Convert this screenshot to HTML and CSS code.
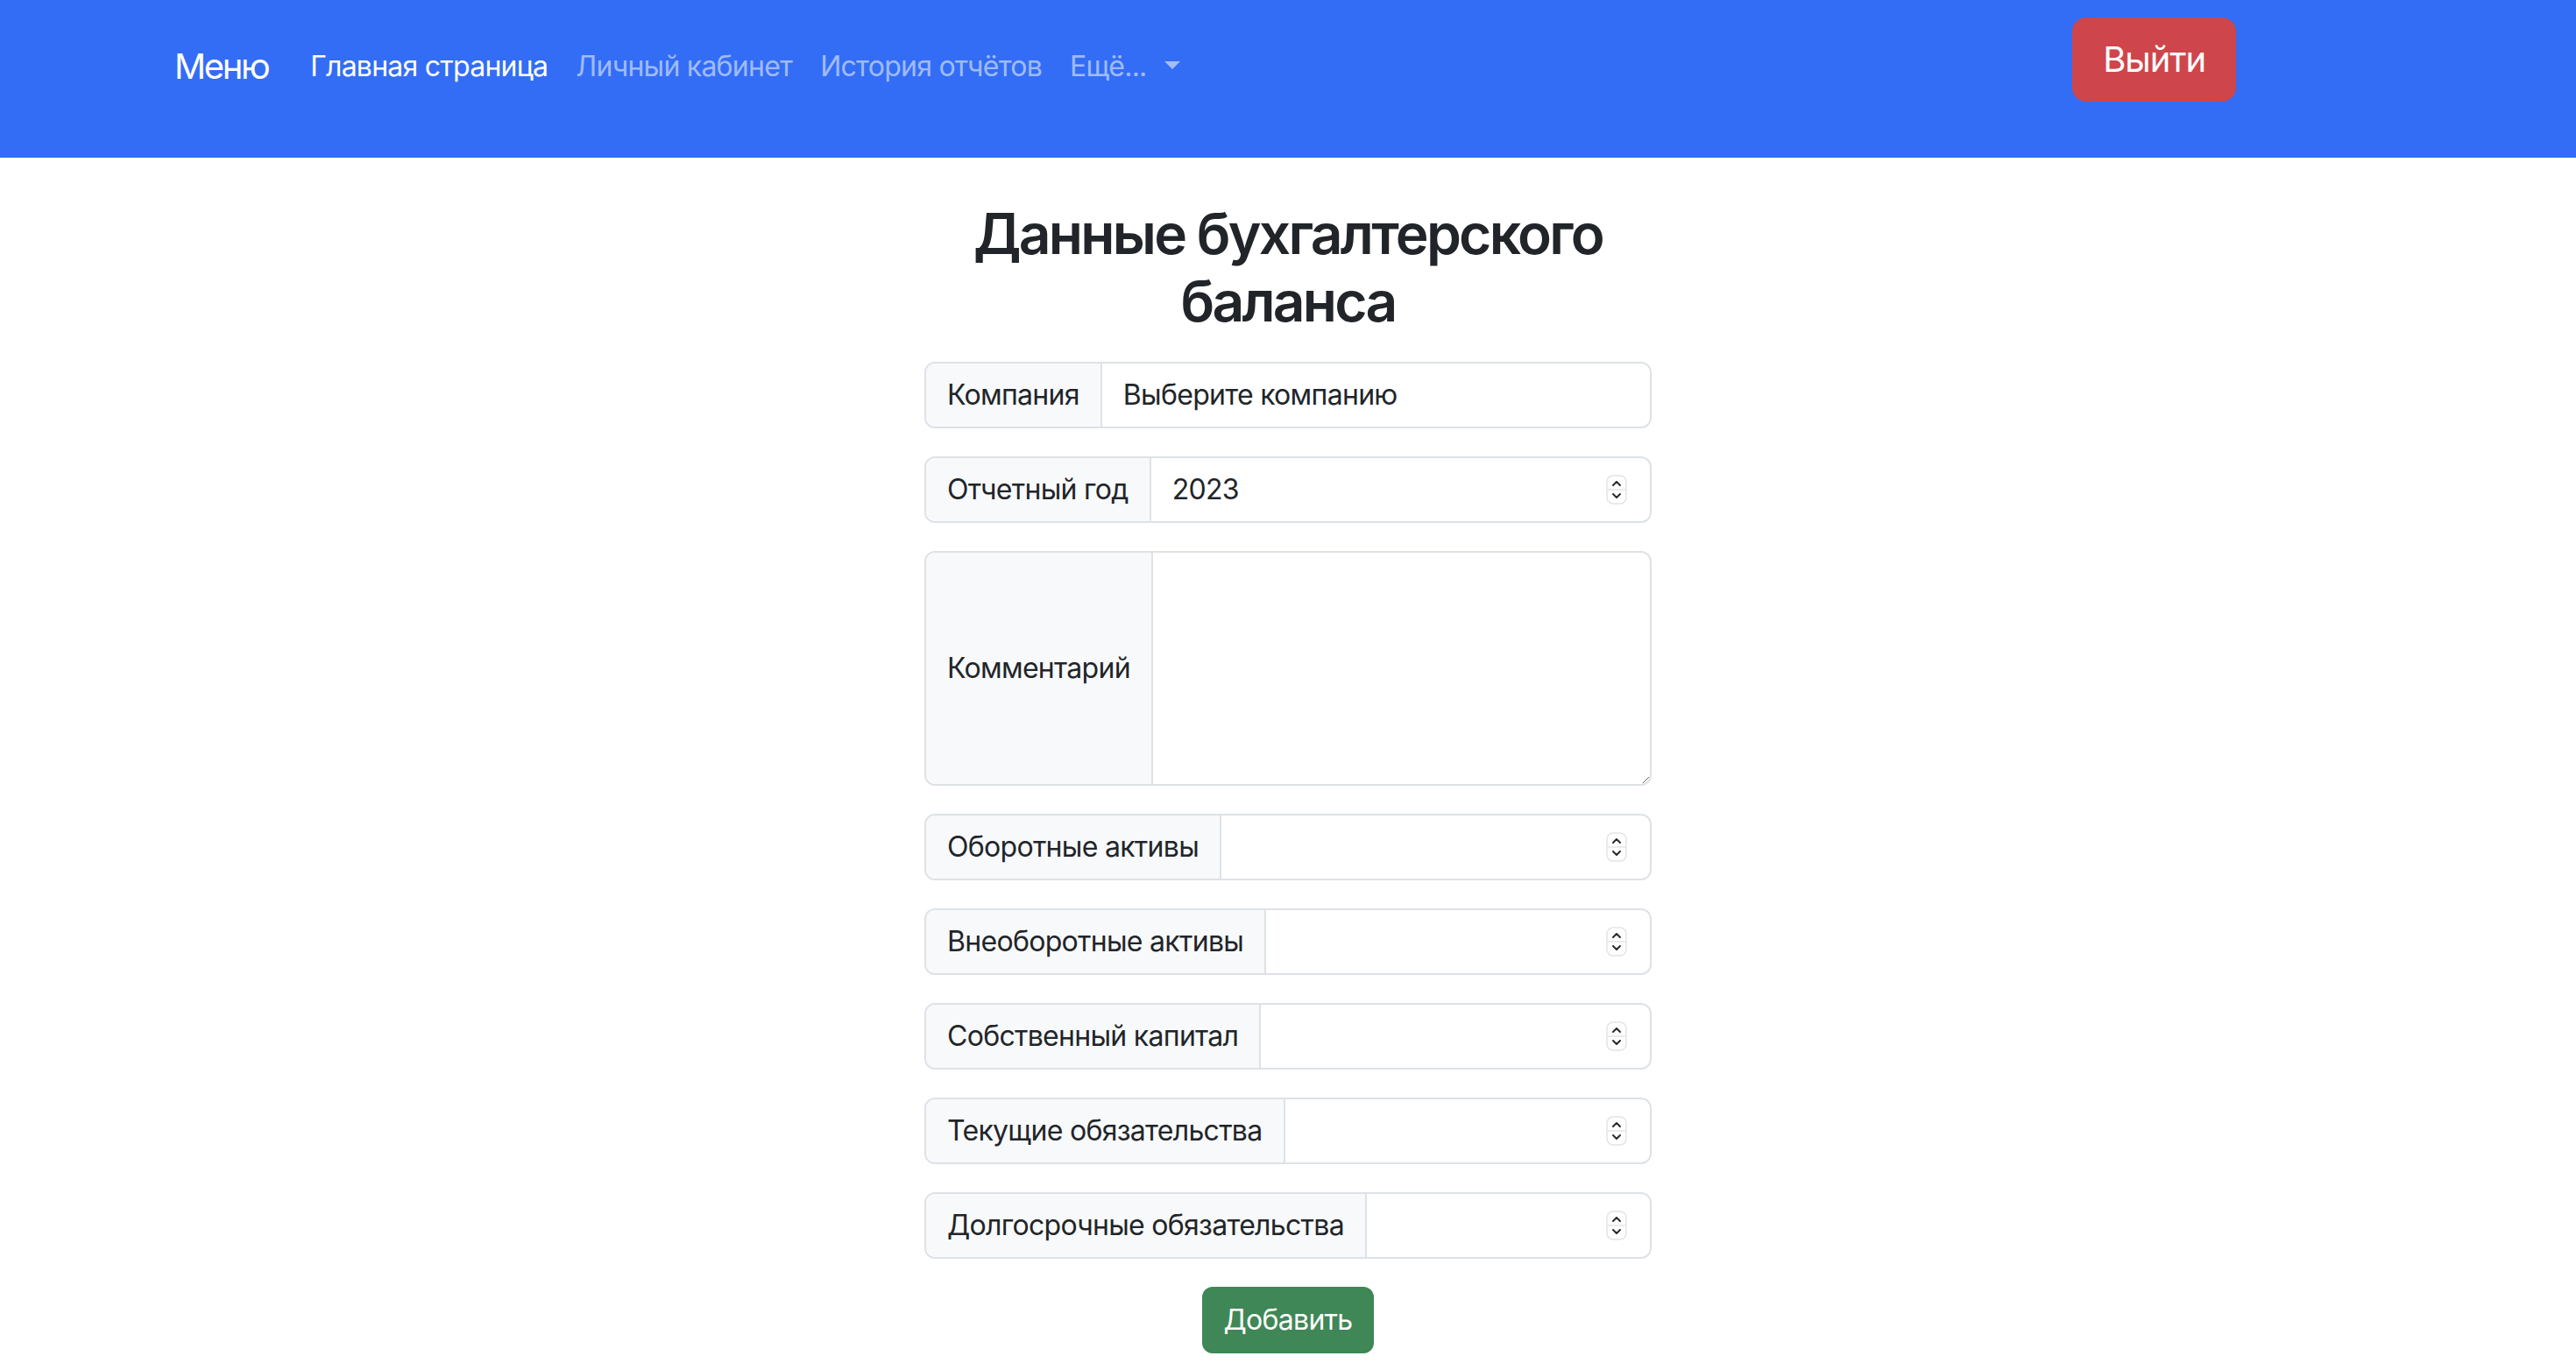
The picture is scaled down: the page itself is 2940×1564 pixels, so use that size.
FILE: index.html
```html
<!DOCTYPE html>
<html lang="ru">
<head>
<meta charset="utf-8">
<title>Данные бухгалтерского баланса</title>
<link rel="stylesheet" href="styles.css">
</head>
<body>
<nav class="navbar">
  <div class="nav-inner">
    <a class="brand" href="#">Меню</a>
    <ul class="nav-links">
      <li><a class="nav-link active" href="#">Главная страница</a></li>
      <li><a class="nav-link" href="#">Личный кабинет</a></li>
      <li><a class="nav-link" href="#">История отчётов</a></li>
      <li><a class="nav-link dropdown" href="#">Ещё...<span class="caret"></span></a></li>
    </ul>
    <button class="btn btn-logout" type="button">Выйти</button>
  </div>
</nav>

<main class="content">
  <h2 class="title">Данные бухгалтерского баланса</h2>
  <form class="form">
    <div class="group">
      <span class="group-label">Компания</span>
      <div class="field"><span class="field-text">Выберите компанию</span></div>
    </div>
    <div class="group">
      <span class="group-label">Отчетный год</span>
      <div class="field"><input class="field-input" type="text" value="2023"><span class="spin"><svg width="24" height="34" viewBox="0 0 24 34"><rect x="1" y="1" width="22" height="32" rx="7" fill="#fff" stroke="#e2e4e8" stroke-width="1.5"/><line x1="1.5" y1="17" x2="22.5" y2="17" stroke="#e2e4e8" stroke-width="1.5"/><path d="M8 12 L12 8 L16 12" fill="none" stroke="#2a2a2a" stroke-width="2" stroke-linecap="round" stroke-linejoin="round"/><path d="M8 22 L12 26 L16 22" fill="none" stroke="#2a2a2a" stroke-width="2" stroke-linecap="round" stroke-linejoin="round"/></svg></span></div>
    </div>
    <div class="group group-tall">
      <span class="group-label">Комментарий</span>
      <div class="field"><textarea class="field-area" rows="5"></textarea></div>
    </div>
    <div class="group">
      <span class="group-label">Оборотные активы</span>
      <div class="field"><input class="field-input" type="text" value=""><span class="spin"><svg width="24" height="34" viewBox="0 0 24 34"><rect x="1" y="1" width="22" height="32" rx="7" fill="#fff" stroke="#e2e4e8" stroke-width="1.5"/><line x1="1.5" y1="17" x2="22.5" y2="17" stroke="#e2e4e8" stroke-width="1.5"/><path d="M8 12 L12 8 L16 12" fill="none" stroke="#2a2a2a" stroke-width="2" stroke-linecap="round" stroke-linejoin="round"/><path d="M8 22 L12 26 L16 22" fill="none" stroke="#2a2a2a" stroke-width="2" stroke-linecap="round" stroke-linejoin="round"/></svg></span></div>
    </div>
    <div class="group">
      <span class="group-label">Внеоборотные активы</span>
      <div class="field"><input class="field-input" type="text" value=""><span class="spin"><svg width="24" height="34" viewBox="0 0 24 34"><rect x="1" y="1" width="22" height="32" rx="7" fill="#fff" stroke="#e2e4e8" stroke-width="1.5"/><line x1="1.5" y1="17" x2="22.5" y2="17" stroke="#e2e4e8" stroke-width="1.5"/><path d="M8 12 L12 8 L16 12" fill="none" stroke="#2a2a2a" stroke-width="2" stroke-linecap="round" stroke-linejoin="round"/><path d="M8 22 L12 26 L16 22" fill="none" stroke="#2a2a2a" stroke-width="2" stroke-linecap="round" stroke-linejoin="round"/></svg></span></div>
    </div>
    <div class="group">
      <span class="group-label">Собственный капитал</span>
      <div class="field"><input class="field-input" type="text" value=""><span class="spin"><svg width="24" height="34" viewBox="0 0 24 34"><rect x="1" y="1" width="22" height="32" rx="7" fill="#fff" stroke="#e2e4e8" stroke-width="1.5"/><line x1="1.5" y1="17" x2="22.5" y2="17" stroke="#e2e4e8" stroke-width="1.5"/><path d="M8 12 L12 8 L16 12" fill="none" stroke="#2a2a2a" stroke-width="2" stroke-linecap="round" stroke-linejoin="round"/><path d="M8 22 L12 26 L16 22" fill="none" stroke="#2a2a2a" stroke-width="2" stroke-linecap="round" stroke-linejoin="round"/></svg></span></div>
    </div>
    <div class="group">
      <span class="group-label">Текущие обязательства</span>
      <div class="field"><input class="field-input" type="text" value=""><span class="spin"><svg width="24" height="34" viewBox="0 0 24 34"><rect x="1" y="1" width="22" height="32" rx="7" fill="#fff" stroke="#e2e4e8" stroke-width="1.5"/><line x1="1.5" y1="17" x2="22.5" y2="17" stroke="#e2e4e8" stroke-width="1.5"/><path d="M8 12 L12 8 L16 12" fill="none" stroke="#2a2a2a" stroke-width="2" stroke-linecap="round" stroke-linejoin="round"/><path d="M8 22 L12 26 L16 22" fill="none" stroke="#2a2a2a" stroke-width="2" stroke-linecap="round" stroke-linejoin="round"/></svg></span></div>
    </div>
    <div class="group">
      <span class="group-label">Долгосрочные обязательства</span>
      <div class="field"><input class="field-input" type="text" value=""><span class="spin"><svg width="24" height="34" viewBox="0 0 24 34"><rect x="1" y="1" width="22" height="32" rx="7" fill="#fff" stroke="#e2e4e8" stroke-width="1.5"/><line x1="1.5" y1="17" x2="22.5" y2="17" stroke="#e2e4e8" stroke-width="1.5"/><path d="M8 12 L12 8 L16 12" fill="none" stroke="#2a2a2a" stroke-width="2" stroke-linecap="round" stroke-linejoin="round"/><path d="M8 22 L12 26 L16 22" fill="none" stroke="#2a2a2a" stroke-width="2" stroke-linecap="round" stroke-linejoin="round"/></svg></span></div>
    </div>
    <div class="actions">
      <button class="btn btn-submit" type="button">Добавить</button>
    </div>
  </form>
</main>
</body>
</html>
```

FILE: styles.css
```css
* {
  box-sizing: border-box;
}

html, body {
  margin: 0;
  padding: 0;
  background: #ffffff;
}

body {
  font-family: Inter, "Liberation Sans", "Noto Sans", sans-serif;
  color: #212529;
  font-size: 32px;
  line-height: 1.5;
}

/* ---------- navbar ---------- */
.navbar {
  background: #336df5;
  height: 180px;
  padding-top: 20px;
}

.nav-inner {
  display: flex;
  align-items: flex-end;
  height: 96px;
  padding-left: 199px;
  padding-right: 388px;
}

.brand {
  font-size: 40px;
  line-height: 60px;
  padding: 10px 0;
  margin-right: 32px;
  color: #ffffff;
  text-decoration: none;
  letter-spacing: -2.4px;
}

.nav-links {
  display: flex;
  list-style: none;
  margin: 0;
  padding: 0;
}

.nav-link {
  display: block;
  font-size: 32px;
  line-height: 48px;
  padding: 16px 16px;
  color: rgba(255, 255, 255, 0.55);
  text-decoration: none;
  letter-spacing: -0.75px;
}

.nav-link.active {
  color: #ffffff;
}

.caret {
  display: inline-block;
  margin-left: 20px;
  vertical-align: 8px;
  border-top: 9.6px solid rgba(255, 255, 255, 0.55);
  border-left: 9.6px solid transparent;
  border-right: 9.6px solid transparent;
  border-bottom: 0;
}

.btn {
  font-family: inherit;
  border: 2px solid transparent;
  color: #ffffff;
  cursor: pointer;
}

.btn-logout {
  margin-left: auto;
  background: #ce464b;
  border-color: #ce464b;
  font-size: 40px;
  line-height: 60px;
  padding: 16px 33px;
  border-radius: 16px;
  letter-spacing: -1.1px;
}

/* ---------- content ---------- */
.content {
  width: 830px;
  margin: 0 auto;
  padding-top: 49px;
}

.title {
  margin: 0 0 30px;
  font-size: 64px;
  font-weight: 600;
  line-height: 1.2;
  text-align: center;
  letter-spacing: -2.7px;
}

.form {
  display: flex;
  flex-direction: column;
  gap: 32px;
}

.group {
  display: flex;
  align-items: stretch;
  height: 76px;
  border: 2px solid #dee2e6;
  border-radius: 12px;
  overflow: hidden;
  background: #ffffff;
}

.group-tall {
  height: 268px;
}

.group-label {
  display: flex;
  align-items: center;
  padding: 0 24px;
  background: #f8f9fa;
  border-right: 2px solid #dee2e6;
  white-space: nowrap;
  font-size: 32px;
  line-height: 48px;
  letter-spacing: -0.7px;
}

.field {
  position: relative;
  flex: 1;
  display: flex;
  align-items: center;
  min-width: 0;
}

.field-text {
  padding: 0 24px;
  letter-spacing: -0.7px;
}

.field-input {
  width: 100%;
  height: 100%;
  border: 0;
  outline: none;
  padding: 0 24px;
  font-family: inherit;
  font-size: 32px;
  color: #212529;
  background: transparent;
  letter-spacing: -0.7px;
}

.field-area {
  width: 100%;
  height: 100%;
  border: 0;
  outline: none;
  padding: 12px 24px;
  font-family: inherit;
  font-size: 32px;
  color: #212529;
  background: transparent;
  resize: vertical;
}

.spin {
  position: absolute;
  right: 26px;
  top: 50%;
  transform: translateY(-50%);
  width: 24px;
  height: 34px;
  display: block;
}

.spin svg {
  display: block;
}

.actions {
  display: flex;
  justify-content: center;
}

.btn-submit {
  background: #3f8756;
  border-color: #3f8756;
  font-size: 32px;
  line-height: 48px;
  padding: 12px 22px;
  border-radius: 12px;
  letter-spacing: -0.7px;
}
```
